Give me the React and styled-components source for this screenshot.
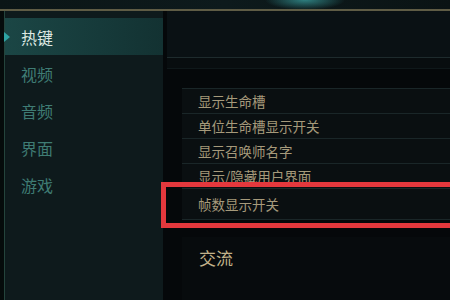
import styled, { createGlobalStyle } from "styled-components";

const GlobalStyle = createGlobalStyle`
  html, body {
    margin: 0;
    padding: 0;
    background: #050809;
  }
  body {
    font-family: "Noto Sans CJK SC", "Noto Sans", sans-serif;
  }
`;

const Frame = styled.div`
  width: 450px;
  height: 300px;
  overflow: hidden;
  display: flex;
  flex-direction: column;
  background: #050809;
`;

const TopBar = styled.div`
  height: 9px;
  flex-shrink: 0;
  background:
    radial-gradient(ellipse 40px 10px at 305px 0px, rgba(60, 170, 170, 0.7), transparent 100%),
    linear-gradient(90deg, #0b1516, #0d1a1c 50%, #0a1314);
  border-bottom: 2px solid #5f5c45;
`;

const Body = styled.div`
  flex: 1;
  display: flex;
  min-height: 0;
`;

const EdgeStrip = styled.div`
  width: 4px;
  flex-shrink: 0;
  background: #050b0b;
  border-right: 1px solid #24443c;
`;

const Sidebar = styled.nav`
  width: 158px;
  flex-shrink: 0;
  background: #0e1a1c;
  padding-top: 7px;
  display: flex;
  flex-direction: column;
`;

const MenuItem = styled.div`
  position: relative;
  height: 37px;
  display: flex;
  align-items: center;
  padding-left: 16px;
  font-size: 16px;
  color: ${(p) => (p.$active ? "#dfe9e4" : "#3f7c74")};
  background: ${(p) =>
    p.$active ? "linear-gradient(90deg, #1b4645, #163a3a 60%, #133232)" : "transparent"};

  &::before {
    content: "";
    display: ${(p) => (p.$active ? "block" : "none")};
    position: absolute;
    left: -1px;
    top: 14px;
    border-top: 5px solid transparent;
    border-bottom: 5px solid transparent;
    border-left: 6px solid #2ea3a3;
  }
`;

const Content = styled.main`
  flex: 1;
  display: flex;
  flex-direction: column;
  background: #05080a;
  position: relative;
`;

const HeaderBand = styled.div`
  height: 46px;
  flex-shrink: 0;
  background: #0a1114;
  border-bottom: 1px solid #1e2b2d;
  margin-left: 4px;
`;

const SubBand = styled.div`
  height: 10px;
  flex-shrink: 0;
  background: #080d0f;
  border-bottom: 1px solid #0f181a;
  margin-left: 4px;
`;

const List = styled.div`
  margin-top: 19px;
  margin-left: 19px;
  display: flex;
  flex-direction: column;
  border-top: 1px solid #1a2628;
`;

const Row = styled.div`
  position: relative;
  height: ${(p) => (p.$tall ? "30px" : "24px")};
  display: flex;
  align-items: center;
  padding-left: 16px;
  font-size: 13.5px;
  color: #a69a7b;
  background: #0a0f11;
  border-bottom: 1px solid #1a2628;
  white-space: nowrap;
`;

const Highlight = styled.div`
  position: absolute;
  left: -21px;
  top: -7px;
  right: -20px;
  bottom: -9px;
  border: 5px solid #e4383d;
  pointer-events: none;
`;

const Section = styled.div`
  margin-top: 17px;
  margin-left: 19px;
  flex: 1;
  background: #070b0d;
  padding: 8px 0 0 17px;
`;

const SectionTitle = styled.div`
  font-size: 17px;
  color: #c2b38a;
`;

const menu = ["热键", "视频", "音频", "界面", "游戏"];
const rows = ["显示生命槽", "单位生命槽显示开关", "显示召唤师名字", "显示/隐藏用户界面"];

export default function App() {
  return (
    <Frame>
      <GlobalStyle />
      <TopBar />
      <Body>
        <EdgeStrip />
        <Sidebar>
          {menu.map((m, i) => (
            <MenuItem key={m} $active={i === 0}>
              {m}
            </MenuItem>
          ))}
        </Sidebar>
        <Content>
          <HeaderBand />
          <SubBand />
          <List>
            {rows.map((r) => (
              <Row key={r}>{r}</Row>
            ))}
            <Row $tall>
              帧数显示开关
              <Highlight />
            </Row>
          </List>
          <Section>
            <SectionTitle>交流</SectionTitle>
          </Section>
        </Content>
      </Body>
    </Frame>
  );
}
